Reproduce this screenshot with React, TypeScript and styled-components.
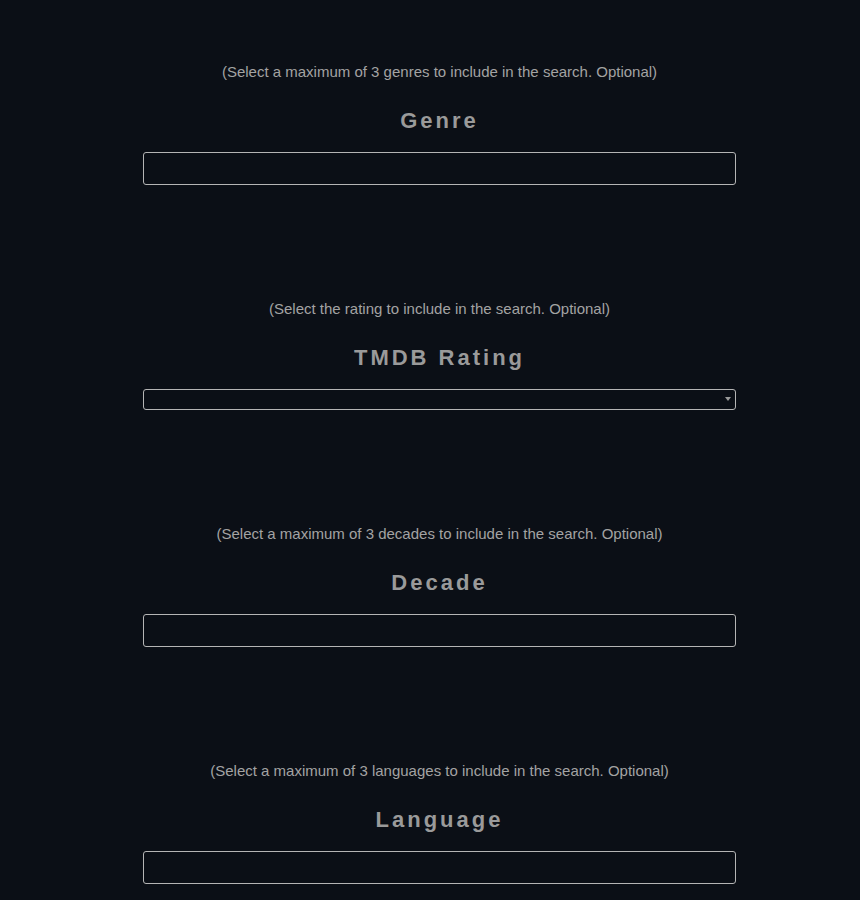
import styled, { createGlobalStyle } from "styled-components";

const GlobalStyle = createGlobalStyle`
  html, body {
    margin: 0;
    background: #0b0f16;
  }
  body {
    font-family: "Liberation Sans", Arial, sans-serif;
  }
`;

const Page = styled.main`
  width: 593px;
  margin-left: 143px;
  padding-top: 62px;
  display: flex;
  flex-direction: column;
  gap: 114px;
`;

const Section = styled.section`
  display: flex;
  flex-direction: column;
  align-items: center;
`;

const Hint = styled.p`
  margin: 0;
  font-size: 15px;
  line-height: 20px;
  color: #a3a3a3;
`;

const Title = styled.h2`
  margin: 25px 0 0 0;
  font-size: 22px;
  line-height: 28px;
  font-weight: bold;
  letter-spacing: 3px;
  color: #9a9a9a;
`;

const Field = styled.input`
  box-sizing: border-box;
  width: 100%;
  height: 33px;
  margin-top: 17px;
  background: #0b0f16;
  border: 1px solid #b5b5b5;
  border-radius: 3px;
  color: #ddd;
  outline: none;
`;

const SelectWrap = styled.div`
  position: relative;
  width: 100%;
  margin-top: 17px;
`;

const Select = styled.select`
  box-sizing: border-box;
  width: 100%;
  height: 21px;
  background: #0b0f16;
  border: 1px solid #b5b5b5;
  border-radius: 3px;
  color: #ddd;
  appearance: none;
  outline: none;
`;

const Caret = styled.span`
  position: absolute;
  right: 5px;
  top: 8px;
  width: 0;
  height: 0;
  border-left: 3px solid transparent;
  border-right: 3px solid transparent;
  border-top: 4px solid #9a9a9a;
  pointer-events: none;
`;

const sections = [
  { hint: "(Select a maximum of 3 genres to include in the search. Optional)", title: "Genre" },
  { hint: "(Select the rating to include in the search. Optional)", title: "TMDB Rating", select: true },
  { hint: "(Select a maximum of 3 decades to include in the search. Optional)", title: "Decade" },
  { hint: "(Select a maximum of 3 languages to include in the search. Optional)", title: "Language" },
];

function App() {
  return (
    <>
      <GlobalStyle />
      <Page>
        {sections.map((s) => (
          <Section key={s.title}>
            <Hint>{s.hint}</Hint>
            <Title>{s.title}</Title>
            {s.select ? (
              <SelectWrap>
                <Select defaultValue="">
                  <option value=""></option>
                </Select>
                <Caret />
              </SelectWrap>
            ) : (
              <Field type="text" />
            )}
          </Section>
        ))}
      </Page>
    </>
  );
}

export default App;
